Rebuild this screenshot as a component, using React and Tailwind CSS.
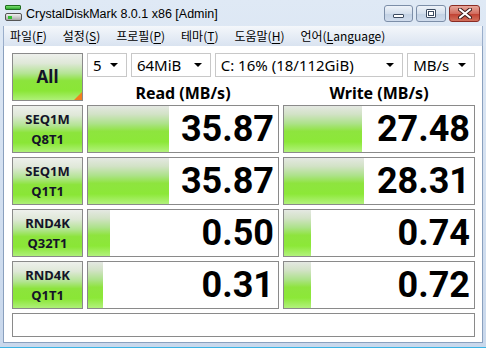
import React from "react";

const GRAD =
  "bg-[linear-gradient(to_bottom,#e4e8e2_0%,#d2e2c6_18%,#ade28a_38%,#8ee43e_55%,#8ce838_78%,#b2f27c_100%)]";
const LBL =
  "bg-[linear-gradient(to_bottom,#eef0ec_0%,#dfe8d8_20%,#b4e494_42%,#8ce43c_58%,#8ae636_80%,#aef078_100%)]";

function U({ children }) {
  return <span className="underline underline-offset-2">{children}</span>;
}

function Combo({ w, children }) {
  return (
    <div
      className={`flex h-[24px] items-center justify-between border border-[#c8c8c8] bg-white pl-[5px] pr-[8px] text-[15px] text-black ${w}`}
    >
      <span className="leading-none">{children}</span>
      <span className="h-0 w-0 border-x-[4px] border-t-[4px] border-x-transparent border-t-black" />
    </div>
  );
}

function Label({ a, b }) {
  return (
    <div
      className={`flex h-[48px] flex-col items-center justify-center border border-[#8a8a8a] ${LBL} text-[13px] font-bold leading-[20px] text-[#141428]`}
    >
      <span>{a}</span>
      <span>{b}</span>
    </div>
  );
}

function Cell({ value, w }) {
  return (
    <div className="relative h-[48px] overflow-hidden border border-[#8a8a8a] bg-white">
      <div className={`absolute inset-y-0 left-0 ${GRAD}`} style={{ width: w }} />
      <div className="relative flex h-full items-center justify-end pr-[4px] font-['Roboto',sans-serif] text-[36px] font-bold leading-none text-black">
        {value}
      </div>
    </div>
  );
}

export default function App() {
  return (
    <div className="flex h-[348px] w-[486px] flex-col overflow-hidden bg-[linear-gradient(to_bottom,#dfe9f5,#c9d8ec)] font-['Noto_Sans','Noto_Sans_CJK_KR',sans-serif]">
      {/* Title bar */}
      <div className="flex h-[26px] shrink-0 items-start">
        <div className="ml-[5px] mt-[5px] flex w-[17px] flex-col gap-[3px]">
          <div className="h-[5px] w-[16px] rounded-[1px] border border-[#1f6b1f] bg-[linear-gradient(to_bottom,#7ae070,#2fa82f)]" />
          <div className="flex h-[8px] w-[17px] items-center rounded-[2px] border border-[#555] bg-[linear-gradient(to_bottom,#f0f0f0,#a8a8a8)] pl-[2px]">
            <div className="h-[3px] w-[4px] bg-[#30c030]" />
          </div>
        </div>
        <div className="ml-[4px] mt-[4px] font-['Liberation_Sans',sans-serif] text-[12.5px] leading-[20px] text-black">
          CrystalDiskMark 8.0.1 x86 [Admin]
        </div>
        <div className="ml-auto mr-[6px] mt-[5px] flex gap-[3px]">
          <div className="flex h-[17px] w-[29px] items-center justify-center rounded-[3px] border border-[#7c8ea8] bg-[linear-gradient(to_bottom,#eef3f9,#d4dfed_50%,#c2d1e4_51%,#d0dced)]">
            <div className="mt-[5px] h-[4px] w-[11px] rounded-[1px] border border-[#3b4a60] bg-white" />
          </div>
          <div className="flex h-[17px] w-[30px] items-center justify-center rounded-[3px] border border-[#7c8ea8] bg-[linear-gradient(to_bottom,#eef3f9,#d4dfed_50%,#c2d1e4_51%,#d0dced)]">
            <div className="h-[9px] w-[10px] rounded-[1px] border border-[#3b4a60] bg-white p-[1px]">
              <div className="h-full w-full border border-[#3b4a60]" />
            </div>
          </div>
          <div className="flex h-[17px] w-[31px] items-center justify-center rounded-[3px] border border-[#8a2c24] bg-[linear-gradient(to_bottom,#e8a89c,#d26e60_50%,#bf3f30_51%,#d2705c)]">
            <svg width="14" height="11" viewBox="0 0 14 11">
              <path d="M2 1.5 L12 9.5 M12 1.5 L2 9.5" stroke="#3a1a18" strokeWidth="4" strokeLinecap="round" />
              <path d="M2 1.5 L12 9.5 M12 1.5 L2 9.5" stroke="#ffffff" strokeWidth="2.2" strokeLinecap="round" />
            </svg>
          </div>
        </div>
      </div>

      {/* Menu bar */}
      <div className="mx-[3px] flex h-[20px] shrink-0 items-center gap-[16px] border-x border-[#9aaecb] bg-[linear-gradient(to_bottom,#f4f7fb,#e4ebf5_60%,#d9e3f0)] pl-[6px] font-['Noto_Sans_CJK_KR',sans-serif] text-[12px] leading-none text-black">
        <span>파일(<U>F</U>)</span>
        <span>설정(<U>S</U>)</span>
        <span>프로필(<U>P</U>)</span>
        <span>테마(<U>T</U>)</span>
        <span>도움말(<U>H</U>)</span>
        <span>언어(<U>L</U>anguage)</span>
      </div>

      {/* Client */}
      <div className="mx-[3px] flex-1 border-x border-b border-[#8aa0be] bg-white pl-[8px] pr-[6px] pt-[7px]">
        <div className="grid grid-cols-[71px_192px_192px] gap-x-[4px] gap-y-[4px]">
          <div className={`relative flex h-[48px] items-center justify-center overflow-hidden border border-[#8a8a8a] ${LBL} text-[17px] font-bold text-[#141428]`}>
            All
            <span className="absolute bottom-0 right-0 h-0 w-0 border-b-[8px] border-l-[8px] border-b-[#f08020] border-l-transparent" />
          </div>
          <div className="col-span-2 flex flex-col">
            <div className="flex h-[24px] gap-[4px]">
              <Combo w="w-[40px]">5</Combo>
              <Combo w="w-[80px]">64MiB</Combo>
              <Combo w="w-[189px]">C: 16% (18/112GiB)</Combo>
              <Combo w="w-[68px]">MB/s</Combo>
            </div>
            <div className="flex h-[24px] items-start pt-[6px]">
              <div className="w-[192px] text-center text-[16px] font-bold leading-[20px] text-black">Read (MB/s)</div>
              <div className="ml-[4px] w-[192px] text-center text-[16px] font-bold leading-[20px] text-black">Write (MB/s)</div>
            </div>
          </div>

          <Label a="SEQ1M" b="Q8T1" />
          <Cell value="35.87" w="81px" />
          <Cell value="27.48" w="78px" />

          <Label a="SEQ1M" b="Q1T1" />
          <Cell value="35.87" w="81px" />
          <Cell value="28.31" w="80px" />

          <Label a="RND4K" b="Q32T1" />
          <Cell value="0.50" w="22px" />
          <Cell value="0.74" w="27px" />

          <Label a="RND4K" b="Q1T1" />
          <Cell value="0.31" w="15px" />
          <Cell value="0.72" w="27px" />

          <div className="col-span-3 h-[24px] border border-[#8a8a8a] bg-white" />
        </div>
      </div>
      <div className="h-[5px] shrink-0 border-b border-[#3cb4e4]" />
    </div>
  );
}
